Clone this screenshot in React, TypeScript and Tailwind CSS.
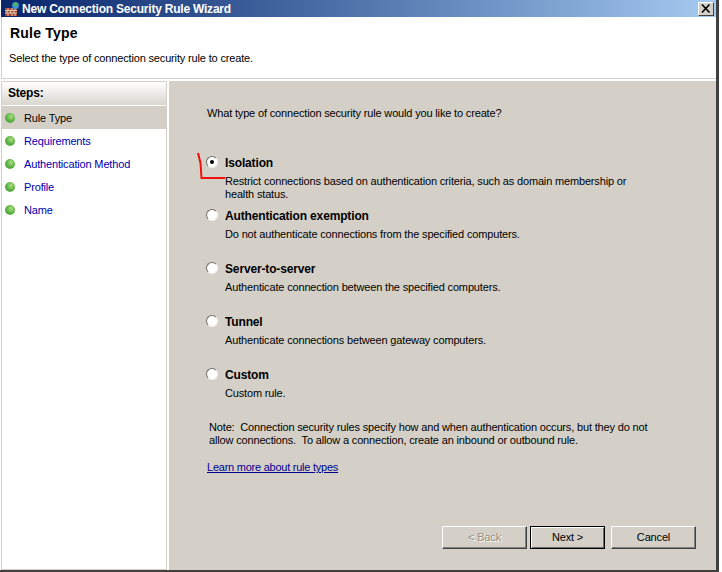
import React from 'react'

const steps = ['Rule Type', 'Requirements', 'Authentication Method', 'Profile', 'Name']

const options = [
  { label: 'Isolation', lines: ['Restrict connections based on authentication criteria, such as domain membership or', 'health status.'], checked: true },
  { label: 'Authentication exemption', lines: ['Do not authenticate connections from the specified computers.'] },
  { label: 'Server-to-server', lines: ['Authenticate connection between the specified computers.'] },
  { label: 'Tunnel', lines: ['Authenticate connections between gateway computers.'] },
  { label: 'Custom', lines: ['Custom rule.'] },
]

function Bullet() {
  return (
    <span className="w-[10px] h-[10px] rounded-full shrink-0 bg-[radial-gradient(circle_at_60%_35%,#a8e080,#4fa83a_60%,#8fc880)]" />
  )
}

function Radio({ checked }: { checked?: boolean }) {
  return (
    <span className="w-3 h-3 -mt-[2px] rounded-full shrink-0 bg-white border border-t-[#6e6c66] border-l-[#6e6c66] border-r-[#f4f2ee] border-b-[#f4f2ee] flex items-center justify-center">
      {checked && <span className="w-1 h-1 rounded-full bg-black" />}
    </span>
  )
}

function WinButton({ label, disabled, primary, className }: { label: string; disabled?: boolean; primary?: boolean; className: string }) {
  const edge = primary
    ? 'border border-black shadow-[inset_1px_1px_0_#fff,inset_-1px_-1px_0_#6e6c66]'
    : 'border border-t-white border-l-white border-r-[#404040] border-b-[#404040] shadow-[inset_-1px_-1px_0_#808080]'
  return (
    <button className={`h-[23px] bg-[#d4d0c8] text-[11px] leading-none ${edge} ${disabled ? 'text-[#8f8d87] [text-shadow:1px_1px_0_#fff]' : 'text-black'} ${className}`}>
      {label}
    </button>
  )
}

export default function App() {
  return (
    <div className="w-[722px] h-[572px] bg-white font-['Liberation_Sans',sans-serif] text-[11px] tracking-[-0.16px] text-black">
      <div className="relative w-[719px] h-[572px] flex flex-col border-r-[3px] border-b-2 border-[#404040]">
        {/* Title bar */}
        <div className="h-[17px] shrink-0 ml-[1px] flex items-center bg-gradient-to-r from-[#0a246a] to-[#a6caf0] pl-[4px] pr-[2px]">
          <svg width="16" height="16" viewBox="0 0 16 16" className="shrink-0">
            <rect x="0" y="7" width="12" height="8" fill="#a0452c" />
            <path d="M0 9.500h12M0 12h12M3 7v2.500M7 7v2.500M10 7v2.500M2 9.500V12M5.500 9.500V12M9 9.500V12M3 12v3M7 12v3M10 12v3" stroke="#e8c8b0" strokeWidth="1" />
            <circle cx="10.500" cy="4.500" r="3.500" fill="#3d8fd8" />
            <path d="M8.500 3l2-2 2 2-1 2-2 0z" fill="#58b848" />
          </svg>
          <span className="ml-[1px] text-[12px] font-bold tracking-[-0.22px] text-white">New Connection Security Rule Wizard</span>
          <span className="ml-auto w-4 h-[14px] bg-[#d4d0c8] border border-t-white border-l-white border-r-[#404040] border-b-[#404040] flex items-center justify-center">
            <svg width="10" height="9" viewBox="0 0 10 9">
              <path d="M1 0.500l7.500 8M8.500 0.500l-7.500 8" stroke="#000" strokeWidth="1.600" />
            </svg>
          </span>
        </div>

        {/* Header */}
        <div className="h-[61px] shrink-0 ml-[1px] pl-[8px] pt-[8px] bg-white border-l border-[#d4d0c8]">
          <h1 className="text-[14px] leading-[17px] font-bold tracking-[0.2px]">Rule Type</h1>
          <p className="mt-[9px] -ml-[1px] leading-[15px]">Select the type of connection security rule to create.</p>
        </div>
        <div className="h-[3px] shrink-0 ml-[1px] bg-white border-t border-[#d4d0c8]" />

        <div className="flex flex-1 min-h-0 bg-[#d4d0c8]">
          {/* Steps panel */}
          <div className="w-[169px] shrink-0 bg-white pl-[1px] pr-[2px]">
            <div className="h-full bg-white border border-[#d4d0c8]">
              <div className="h-[23px] pl-[6px] pb-[2px] flex items-center font-bold text-[12px] tracking-[-0.2px] bg-gradient-to-b from-white to-[#d9d6cf]">Steps:</div>
              <div className="mt-[1px]">
                {steps.map((step, i) => (
                  <div key={step} className={`h-[23px] pl-[3px] flex items-center gap-[9px] ${i === 0 ? 'bg-[#d4d0c8] text-black' : 'text-[#0000b0]'}`}>
                    <Bullet />
                    <span className="pt-[2px]">{step}</span>
                  </div>
                ))}
              </div>
            </div>
          </div>

          {/* Main panel */}
          <div className="flex-1 min-w-0 flex flex-col pl-[38px] pt-[25px] relative">
            <p className="leading-[15px]">What type of connection security rule would you like to create?</p>
            <div className="mt-[34px] flex flex-col">
              {options.map((o) => (
                <div key={o.label} className="h-[53px]">
                  <div className="flex items-center gap-[7px] -ml-[1px] h-[15px]">
                    <Radio checked={o.checked} />
                    <span className="font-bold text-[12px] tracking-[-0.15px]">{o.label}</span>
                  </div>
                  <div className="pl-[18px] mt-[5px] leading-[13px]">
                    {o.lines.map((l) => <div key={l}>{l}</div>)}
                  </div>
                </div>
              ))}
            </div>
            <div className="mt-[1px] ml-[2px] leading-[13px]">
              <div>Note:&nbsp; Connection security rules specify how and when authentication occurs, but they do not</div>
              <div>allow connections.&nbsp; To allow a connection, create an inbound or outbound rule.</div>
            </div>
            <a className="mt-[13px] leading-[15px] tracking-[-0.24px] text-[#000090] underline">Learn more about rule types</a>

            <div className="mt-auto mb-[21px] flex">
              <WinButton label="< Back" disabled className="w-[85px] ml-[235px]" />
              <WinButton label="Next >" primary className="w-[75px] ml-[3px]" />
              <WinButton label="Cancel" className="w-[85px] ml-[6px]" />
            </div>

            {/* Red annotation drawn over the screenshot */}
            <svg className="absolute left-[27px] top-[71px]" width="36" height="34" viewBox="0 0 36 34">
              <path d="M2 1l2.500 10 1 15H29" fill="none" stroke="#f01010" strokeWidth="2" />
            </svg>
          </div>
        </div>
      </div>
    </div>
  )
}
